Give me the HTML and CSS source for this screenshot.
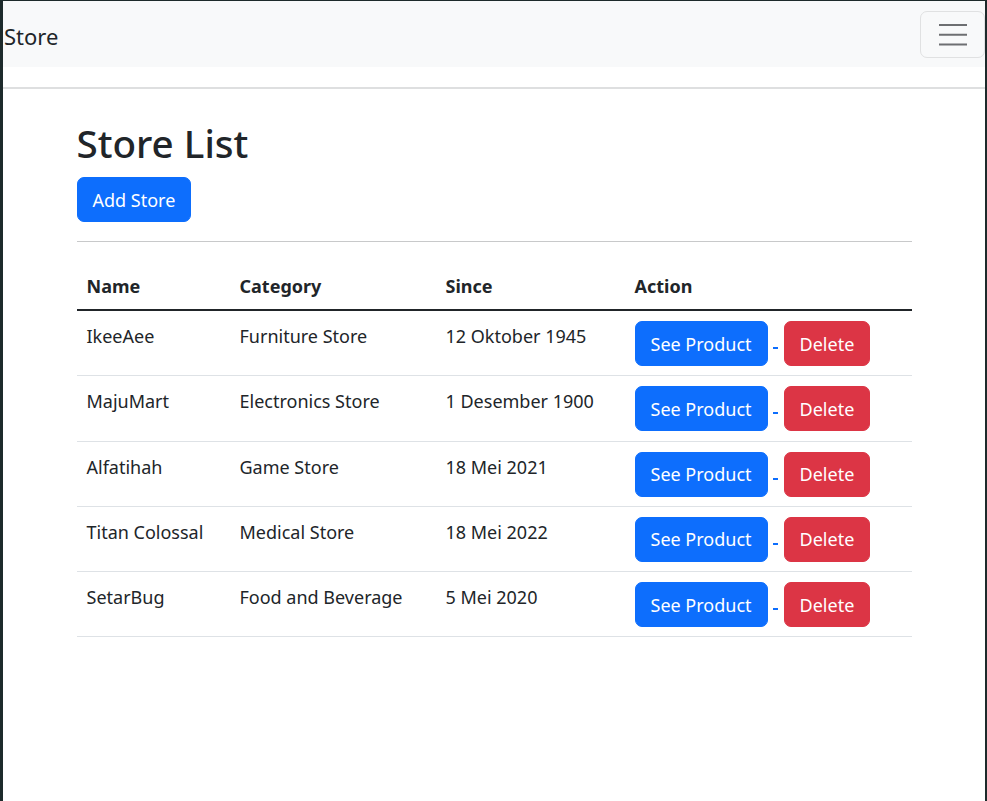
FILE: index.html
```html
<!DOCTYPE html>
<html lang="en">
<head>
<meta charset="utf-8">
<title>Store List</title>
<link rel="stylesheet" href="styles.css">
</head>
<body>
<div class="frame">
  <nav class="navbar">
    <a class="brand" href="#">Store</a>
    <button class="toggler" type="button" aria-label="Toggle navigation">
      <svg width="28" height="22" viewBox="0 0 28 22" aria-hidden="true">
        <path d="M0 1h28M0 10.7h28M0 20.4h28" stroke="#6d6f72" stroke-width="2" fill="none"/>
      </svg>
    </button>
  </nav>
  <div class="nav-rule"></div>
  <main class="container">
    <h1 class="title">Store List</h1>
    <a class="btn btn-primary" href="#">Add Store</a>
    <hr class="divider">
    <table class="table">
      <colgroup>
        <col class="c-name"><col class="c-cat"><col class="c-since"><col class="c-action">
      </colgroup>
      <thead>
        <tr><th>Name</th><th>Category</th><th>Since</th><th>Action</th></tr>
      </thead>
      <tbody>
        <tr>
          <td>IkeeAee</td><td>Furniture Store</td><td>12 Oktober 1945</td>
          <td><div class="actions"><a class="btn btn-primary" href="#">See Product</a><span class="dash"></span><a class="btn btn-danger" href="#">Delete</a></div></td>
        </tr>
        <tr>
          <td>MajuMart</td><td>Electronics Store</td><td>1 Desember 1900</td>
          <td><div class="actions"><a class="btn btn-primary" href="#">See Product</a><span class="dash"></span><a class="btn btn-danger" href="#">Delete</a></div></td>
        </tr>
        <tr>
          <td>Alfatihah</td><td>Game Store</td><td>18 Mei 2021</td>
          <td><div class="actions"><a class="btn btn-primary" href="#">See Product</a><span class="dash"></span><a class="btn btn-danger" href="#">Delete</a></div></td>
        </tr>
        <tr>
          <td>Titan Colossal</td><td>Medical Store</td><td>18 Mei 2022</td>
          <td><div class="actions"><a class="btn btn-primary" href="#">See Product</a><span class="dash"></span><a class="btn btn-danger" href="#">Delete</a></div></td>
        </tr>
        <tr>
          <td>SetarBug</td><td>Food and Beverage</td><td>5 Mei 2020</td>
          <td><div class="actions"><a class="btn btn-primary" href="#">See Product</a><span class="dash"></span><a class="btn btn-danger" href="#">Delete</a></div></td>
        </tr>
      </tbody>
    </table>
  </main>
</div>
</body>
</html>
```

FILE: styles.css
```css
* { box-sizing: border-box; }

html, body {
  margin: 0;
  height: 100%;
}

body {
  font-family: "Noto Sans", "Open Sans", sans-serif;
  font-size: 18px;
  line-height: 1.5;
  color: #212529;
  background: #1d2a2b;
}

.frame {
  min-height: 100%;
  background: #ffffff;
  border-top: 1px solid #1d2a2b;
  border-left: 3px solid #1d2a2b;
  border-right: 2px solid #1d2a2b;
}

.navbar {
  height: 66px;
  background: #f8f9fa;
  display: flex;
  align-items: center;
  justify-content: space-between;
  padding-left: 1px;
}

.brand {
  font-size: 22px;
  line-height: 33px;
  padding-top: 4px;
  color: #212529;
  text-decoration: none;
}

.toggler {
  width: 65px;
  height: 47px;
  margin-top: 1px;
  padding: 0;
  display: flex;
  align-items: center;
  justify-content: center;
  background: transparent;
  border: 1px solid #e0e1e2;
  border-radius: 7px;
}

.nav-rule {
  margin-top: 20px;
  height: 2px;
  background: #dedfe0;
}

.container {
  width: 835px;
  margin: 0 auto;
  padding-top: 29.5px;
}

.title {
  margin: 0 0 10.5px;
  font-size: 38.6px;
  line-height: 48px;
  font-weight: 500;
}

.btn {
  display: inline-block;
  padding: 7.5px 15px;
  font-size: 18px;
  line-height: 28px;
  border: 1px solid transparent;
  border-radius: 7px;
  color: #ffffff;
  text-decoration: none;
  white-space: nowrap;
}

.btn-primary {
  background: #0d6efd;
  border-color: #0d6efd;
}

.btn-danger {
  background: #dc3545;
  border-color: #dc3545;
}

.divider {
  margin: 19px 0 0;
  border: 0;
  border-top: 1px solid #c8c9ca;
}

.table {
  width: 100%;
  margin-top: 21px;
  border-collapse: collapse;
  table-layout: fixed;
}

.c-name { width: 153px; }
.c-cat { width: 206px; }
.c-since { width: 189px; }
.c-action { width: 287px; }

.table th {
  text-align: left;
  font-weight: 700;
  padding: 8.5px 10px;
  line-height: 29px;
  border-bottom: 2px solid #212529;
  vertical-align: bottom;
}

.table td {
  padding: 10px 10px 9.3px;
  line-height: 30px;
  vertical-align: top;
  border-bottom: 1px solid #dee2e6;
}

.actions {
  display: flex;
  align-items: flex-start;
}

.dash {
  width: 5px;
  height: 2px;
  margin: 26px 6px 0 5px;
  background: #0d6efd;
}
```
